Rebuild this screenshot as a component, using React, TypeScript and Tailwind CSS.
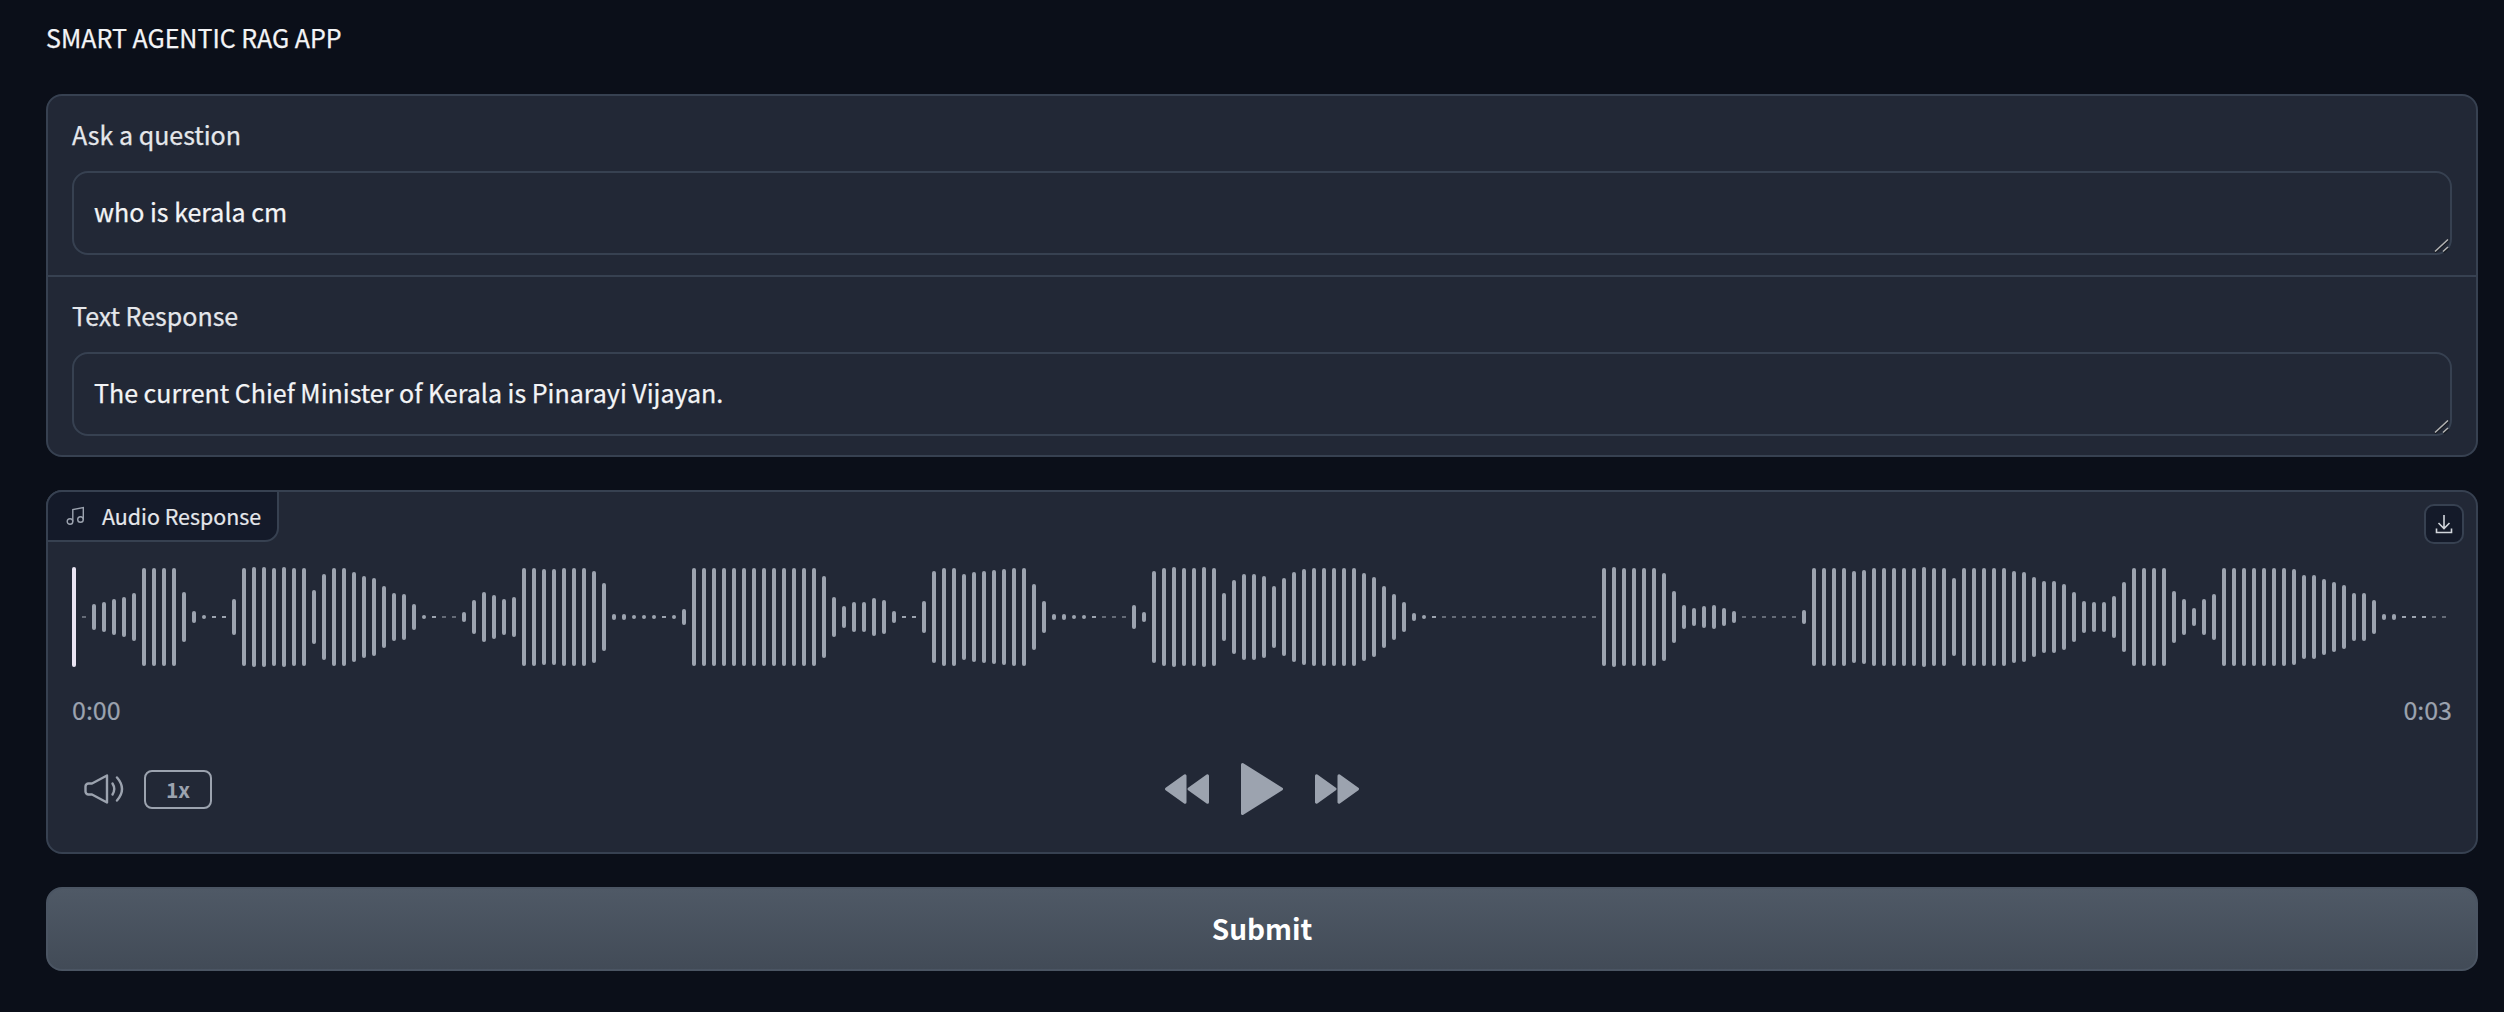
const FONT = "font-['Noto_Sans_CJK_SC','Noto_Sans',sans-serif]";

// bar heights of the wave form, left to right, 10px apart
const bars = [
  1, 26, 30, 36, 40, 48, 98, 98, 98, 98, 50, 12, 4, 2, 2, 36, 98, 100, 100, 98, 100, 98, 98, 54, 86, 98, 98, 90, 82, 78,
  62, 48, 46, 26, 4, 2, 1, 1, 10, 34, 50, 44, 36, 40, 98, 98, 96, 96, 98, 98, 98, 92, 68, 6, 6, 4, 4, 4, 2, 4,
  16, 98, 98, 98, 98, 98, 98, 98, 98, 98, 98, 98, 98, 98, 82, 40, 22, 30, 30, 38, 34, 12, 2, 2, 32, 92, 98, 98, 86, 90,
  92, 94, 96, 98, 98, 66, 32, 6, 6, 4, 4, 2, 1, 1, 1, 24, 10, 92, 98, 100, 98, 98, 100, 98, 48, 74, 86, 86, 82, 62, 78, 90,
  96, 98, 98, 98, 98, 98, 88, 80, 62, 46, 30, 8, 4, 2,
  1, 1, 1, 1, 1, 1, 1, 1, 1, 1, 1, 1, 1, 1, 1, 1,
  98, 100, 98, 98, 98, 98, 88, 52, 24, 18, 22, 24, 18, 12, 1, 1, 1, 1, 1, 1, 14, 98, 98, 98, 98, 92, 94, 98, 98, 98, 98, 98,
  100, 98, 98, 78, 98, 98, 98, 98, 98, 92, 90, 80, 72, 72, 66, 50, 32, 30, 30, 42, 70, 98, 98, 98, 98, 52, 36, 18, 36, 46,
  98, 98, 98, 98, 98, 98, 98, 96, 84, 84, 76, 70, 64, 48, 48, 34, 6, 6, 2, 2, 2, 1, 1,
];

function Waveform() {
  return (
    <svg width="2380" height="100" viewBox="0 0 2380 100" className="block">
      {bars.map((h, i) => (
        <rect
          key={i}
          x={10 + i * 10}
          y={50 - h / 2}
          width={4}
          height={h}
          rx={h > 2 ? 2 : 0}
          fill={h > 1 ? "#9ca3af" : "#a7adb8"}
        />
      ))}
      <rect x={0} y={0} width={4} height={100} rx={2} fill="#e9e4f2" />
    </svg>
  );
}

function ResizeHandle() {
  return (
    <svg width="16" height="14" viewBox="0 0 16 14" fill="none" className="absolute bottom-[2px] right-[2px]">
      <path d="M1 13.5L14.5 1M9.5 13.5L14.5 9" stroke="#14181f" strokeWidth="2" />
      <path d="M1 12.5L14 0.5M9 12.5L14 8" stroke="#b4b4b4" strokeWidth="1.5" />
    </svg>
  );
}

function Field({ label, value }: { label: string; value: string }) {
  return (
    <div className="px-[24px]">
      <div className="h-[36px] text-[25px] leading-[34px] text-[#e5e7eb] [-webkit-text-stroke:0.25px]">{label}</div>
      <div className="relative mt-[18px]">
        <textarea
          readOnly
          defaultValue={value}
          className={`${FONT} block h-[84px] w-full resize-none rounded-[16px] border-2 border-[#374151] bg-transparent px-[20px] py-[20px] text-[25px] leading-[36px] text-[#f3f4f6] outline-none [-webkit-text-stroke:0.25px]`}
        />
        <ResizeHandle />
      </div>
    </div>
  );
}

function MusicIcon() {
  return (
    <svg width="20" height="20" viewBox="0 0 20 20" fill="none" stroke="#9ca3af" strokeWidth="1.4">
      <circle cx="4" cy="15.5" r="2.8" />
      <circle cx="14.5" cy="13.5" r="2.8" />
      <path d="M6.8 15.5V3.5L17.3 1.5V13.5" />
    </svg>
  );
}

function DownloadIcon() {
  return (
    <svg width="18" height="20" viewBox="0 0 18 20" fill="none" stroke="#d1d5db" strokeWidth="1.6">
      <path d="M9 1V14M3.5 9L9 14.5L14.5 9" />
      <path d="M1.5 14.5V18.5H16.5V14.5" />
    </svg>
  );
}

function VolumeIcon() {
  return (
    <svg width="40" height="30" viewBox="0 0 40 30" fill="none" stroke="#9ca3af" strokeWidth="2.4" strokeLinejoin="round" strokeLinecap="round">
      <path d="M23 1.5L8 9.5H4.5a3 3 0 0 0-3 3v5a3 3 0 0 0 3 3H8L23 28.5V1.5Z" />
      <path d="M28.5 9.5Q32 15 28.5 20.5" />
      <path d="M33 3.5Q43 15 33 26.5" />
    </svg>
  );
}

function Rewind() {
  return (
    <svg width="44" height="30" viewBox="0 0 44 30" fill="#9ca3af" stroke="#9ca3af" strokeWidth="3" strokeLinejoin="round">
      <path d="M1.5 15L20 1.8V28.2Z" />
      <path d="M24 15L42.5 1.8V28.2Z" />
    </svg>
  );
}

function Forward() {
  return (
    <svg width="44" height="30" viewBox="0 0 44 30" fill="#9ca3af" stroke="#9ca3af" strokeWidth="3" strokeLinejoin="round">
      <path d="M1.5 1.8L20 15L1.5 28.2Z" />
      <path d="M24 1.8L42.5 15L24 28.2Z" />
    </svg>
  );
}

function Play() {
  return (
    <svg width="42" height="52" viewBox="0 0 42 52" fill="#9ca3af" stroke="#9ca3af" strokeWidth="3" strokeLinejoin="round">
      <path d="M1.5 1.5L40.5 26L1.5 50.5Z" />
    </svg>
  );
}

export default function App() {
  return (
    <div className={`${FONT} h-[1012px] overflow-hidden bg-[#0b0f19] pl-[46px] pr-[26px]`}>
      <div className="flex h-[94px] pt-[19px]">
        <h1 className="h-[36px] text-[25px] font-normal leading-[36px] text-[#f3f4f6] [-webkit-text-stroke:0.25px]">SMART AGENTIC RAG APP</h1>
      </div>

      <div className="rounded-[16px] border-2 border-[#374151] bg-[#222836]">
        <div className="border-b-2 border-[#374151] pb-[20px] pt-[21px]">
          <Field label="Ask a question" value="who is kerala cm" />
        </div>
        <div className="pb-[19px] pt-[21px]">
          <Field label="Text Response" value="The current Chief Minister of Kerala is Pinarayi Vijayan." />
        </div>
      </div>

      <div className="relative mt-[33px] h-[364px] rounded-[16px] border-2 border-[#374151] bg-[#222836] px-[24px] pt-[75px]">
        <div className="absolute left-[-2px] top-[-2px] flex h-[52px] w-[233px] items-center gap-[16px] rounded-br-[14px] rounded-tl-[16px] border-2 border-[#374151] bg-[#141a29] pl-[18px]">
          <MusicIcon />
          <span className="text-[21.4px] leading-[30px] text-[#e5e7eb] [-webkit-text-stroke:0.2px]">Audio Response</span>
        </div>
        <button className="absolute right-[12px] top-[12px] flex h-[40px] w-[40px] items-center justify-center rounded-[10px] border-2 border-[#374151] bg-[#141a29]">
          <DownloadIcon />
        </button>

        <Waveform />

        <div className="mt-[24px] flex h-[36px] justify-between text-[25px] leading-[36px] text-[#9ca3af] [-webkit-text-stroke:0.2px]">
          <span>0:00</span>
          <span>0:03</span>
        </div>

        <div className="mt-[36px] grid h-[52px] grid-cols-3 items-center">
          <div className="flex items-center gap-[20px] pl-[12px]">
            <VolumeIcon />
            <button className="h-[39px] w-[68px] rounded-[8px] border-2 border-[#9ca3af] text-center text-[21px] font-bold leading-[34px] text-[#9ca3af]">
              1x
            </button>
          </div>
          <div className="flex items-center justify-center gap-[32px]">
            <Rewind />
            <Play />
            <Forward />
          </div>
          <div />
        </div>
      </div>

      <button className="mt-[33px] block h-[84px] w-full rounded-[16px] border-2 border-[#4b5563] bg-gradient-to-b from-[#4f5966] to-[#424b57] pb-[2px] text-[28px] font-bold text-white">
        Submit
      </button>
    </div>
  );
}
